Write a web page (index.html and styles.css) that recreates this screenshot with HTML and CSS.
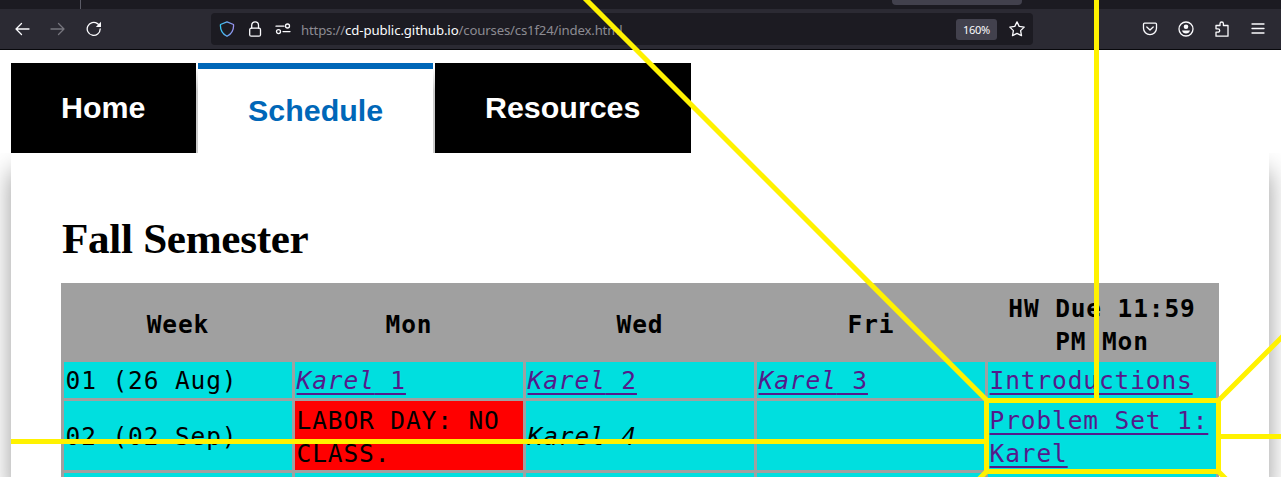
FILE: index.html
```html
<!DOCTYPE html>
<html lang="en">
<head>
<meta charset="utf-8">
<title>Fall Semester</title>
<link rel="stylesheet" href="styles.css">
</head>
<body>
<header class="browser">
  <div class="tabstrip"><span class="tab-divider"></span><span class="tab-hint"></span></div>
  <div class="toolbar">
    <div class="nav">
      <svg class="icon" viewBox="0 0 16 16"><path d="M15 8H2M7.500 2.500 2 8l5.500 5.500"/></svg>
      <svg class="icon dim" viewBox="0 0 16 16"><path d="M1 8h13M8.500 2.500 14 8l-5.500 5.500"/></svg>
      <svg class="icon" viewBox="0 0 16 16"><path d="M14.200 8A6.500 6.500 0 1 1 11.500 2.600L13 4"/><path class="solid" d="M15 .8v5.200H9.800z"/></svg>
    </div>
    <div class="urlbar">
      <svg class="icon" viewBox="0 0 16 16"><defs><linearGradient id="shield" x2="1"><stop stop-color="#35c4f2"/><stop offset="1" stop-color="#9a91ef"/></linearGradient></defs><path stroke="url(#shield)" d="M8 .8 14.500 3.500Q15.200 11.500 8 15.300.8 11.500 1.500 3.500z"/></svg>
      <svg class="icon lock" viewBox="0 0 16 16"><rect x="2.700" y="7.200" width="10.800" height="8" rx="1.500"/><path d="M4.700 7V4.200a3.400 3.400 0 0 1 6.800 0V7"/></svg>
      <svg class="icon perm" viewBox="0 0 16 16"><path d="M1 5.200h8M8 10.600h7"/><circle cx="12.500" cy="5" r="2"/><circle cx="3.500" cy="10.600" r="2"/></svg>
      <span class="url">https://<b>cd-public.github.io</b>/courses/cs1f24/index.html</span>
      <span class="zoom">160%</span>
      <svg class="icon" viewBox="0 0 16 16"><path d="m8 .9 2.200 4.500 5 .7-3.600 3.500.9 5-4.500-2.300-4.500 2.300.9-5L.8 6.100l5-.7z"/></svg>
    </div>
    <div class="actions">
      <svg class="icon" viewBox="0 0 16 16"><path d="M2.500 2.200h11q1 0 1 1v4a6.500 6.500 0 0 1-13 0v-4q0-1 1-1zM4.800 6 8 9l3.200-3"/></svg>
      <svg class="icon" viewBox="0 0 16 16"><circle cx="8" cy="8" r="7"/><circle class="solid" cx="8" cy="5.800" r="2.300"/><path class="solid" d="M4 9.500h8q-.8 3-4 3t-4-3z"/></svg>
      <svg class="icon" viewBox="0 0 16 16"><path d="M2 4.500h4V2.700a1.700 1.700 0 0 1 3.400 0v1.800H14v10.700H2v-4h2a1.700 1.700 0 0 0 0-3.400H2z"/></svg>
      <svg class="icon" viewBox="0 0 16 16"><path d="M2 3h12M2 7.500h12M2 12h12"/></svg>
    </div>
  </div>
</header>
<main class="page">
  <nav class="tabs">
    <a class="tab home">Home</a>
    <a class="tab active">Schedule</a>
    <a class="tab resources">Resources</a>
  </nav>
  <section class="panel">
    <h2 class="title">Fall Semester</h2>
    <div class="schedule">
      <div class="head">Week</div><div class="head">Mon</div><div class="head">Wed</div><div class="head">Fri</div><div class="head">HW Due 11:59<br>PM Mon</div>
      <div class="cell">01 (26 Aug)</div>
      <div class="cell"><span class="link"><i>Karel</i> 1</span></div>
      <div class="cell"><span class="link"><i>Karel</i> 2</span></div>
      <div class="cell"><span class="link"><i>Karel</i> 3</span></div>
      <div class="cell"><span class="link">Introductions</span></div>
      <div class="cell tall">02 (02 Sep)</div>
      <div class="cell tall holiday">LABOR DAY: NO<br>CLASS.</div>
      <div class="cell tall"><i>Karel 4</i></div>
      <div class="cell tall"></div>
      <div class="cell tall"><span class="link">Problem Set 1:<br>Karel</span></div>
      <div class="cell"></div><div class="cell"></div><div class="cell"></div><div class="cell"></div><div class="cell"></div>
    </div>
  </section>
</main>
<svg class="annotation" viewBox="0 0 1281 477">
  <path d="M584-2.500 986.500 400M1096.500 0v400M11 441.500h975M1219 436.500h62M1218.500 400.500 1285 334M986.500 471.500l-10 10M1218.500 471.500l10 10"/>
  <rect x="986.500" y="400.500" width="232" height="71"/>
</svg>
</body>
</html>
```
FILE: styles.css
```css
* { box-sizing: border-box; }
body { margin: 0; width: 1281px; height: 477px; overflow: hidden; position: relative; background: #fff; }

.browser { height: 50px; background: #2b2a33; border-bottom: 1px solid #08080c; }
.tabstrip { height: 9px; background: #1c1b22; display: flex; }
.tab-divider { width: 1px; margin-left: 80px; background: #5b5b66; }
.tab-hint { width: 130px; height: 5px; margin-left: 811px; background: #42414d; border-radius: 0 0 4px 4px; }
.toolbar { height: 40px; display: flex; align-items: center; }
.icon { width: 16px; height: 16px; flex: none; fill: none; stroke: #fbfbfe; stroke-width: 1.3; stroke-linecap: round; stroke-linejoin: round; }
.dim { stroke: #76757d; }
.solid { fill: #fbfbfe; stroke: none; }
.nav { width: 211px; padding-left: 14px; display: flex; gap: 20px; }
.urlbar { width: 822px; height: 32px; padding: 0 8px; display: flex; align-items: center; background: #1c1b22; border-radius: 4px; }
.lock { margin-left: 12px; }
.perm { margin-left: 12px; }
.url { width: 655px; margin-left: 10px; padding-top: 2px; font: 13.2px/20px "Noto Sans", sans-serif; letter-spacing: -0.17px; color: #8c8b92; white-space: nowrap; }
.url b { font-weight: 400; color: #fbfbfe; letter-spacing: -0.1px; }
.zoom { width: 41px; height: 21px; margin-right: 12px; background: #42414d; border-radius: 3px; color: #fbfbfe; font: 11px/21px "Noto Sans", sans-serif; letter-spacing: -0.3px; text-align: center; }
.actions { margin-left: 109px; display: flex; gap: 20px; }

.page { padding: 13px 12px 0 11px; }
.tabs { display: flex; gap: 2px; height: 90px; width: 680px; background: linear-gradient(#fff 5px, #cbcbcb 28px); }
.tab { background: #000; color: #fff; font: bold 30.4px/88px "Liberation Sans", Arial, sans-serif; padding-left: 50px; }
.home { width: 185px; }
.active { width: 235px; background: #fff; color: #0067b8; border-top: 6px solid #0067b8; line-height: 82px; }
.resources { width: 256px; }
.panel { height: 324px; padding: 61px 50px 0; background: #fff; box-shadow: 0 18px 24px rgba(0,0,0,.4); clip-path: inset(0 -20px 0 -20px); overflow: hidden; }
.title { margin: 0 0 19px 1px; font: bold 43.2px/50px "Liberation Serif", "Times New Roman", serif; letter-spacing: -.32px; }
.schedule { width: 1158px; background: #a0a0a0; padding: 3px; display: grid; grid-template-columns: repeat(5, 228px); grid-template-rows: 73px 36px 69px 36px; gap: 3px; font: 24.5px/33px "DejaVu Sans Mono", Consolas, monospace; letter-spacing: .87px; color: #000; }
.head { font-weight: 700; display: flex; align-items: center; justify-content: center; text-align: center; padding-top: 4px; }
.cell { background: #00dfdf; padding: 1px 0 0 1.6px; display: flex; align-items: center; white-space: nowrap; }
.tall { padding-top: 2px; }
.holiday { background: #f00; }
.link { color: #551a8b; text-decoration: underline; text-decoration-thickness: 2px; text-underline-offset: 4px; text-decoration-skip-ink: none; }
.annotation { position: absolute; left: 0; top: 0; width: 1281px; height: 477px; fill: none; stroke: #fff200; stroke-width: 5; }
```
